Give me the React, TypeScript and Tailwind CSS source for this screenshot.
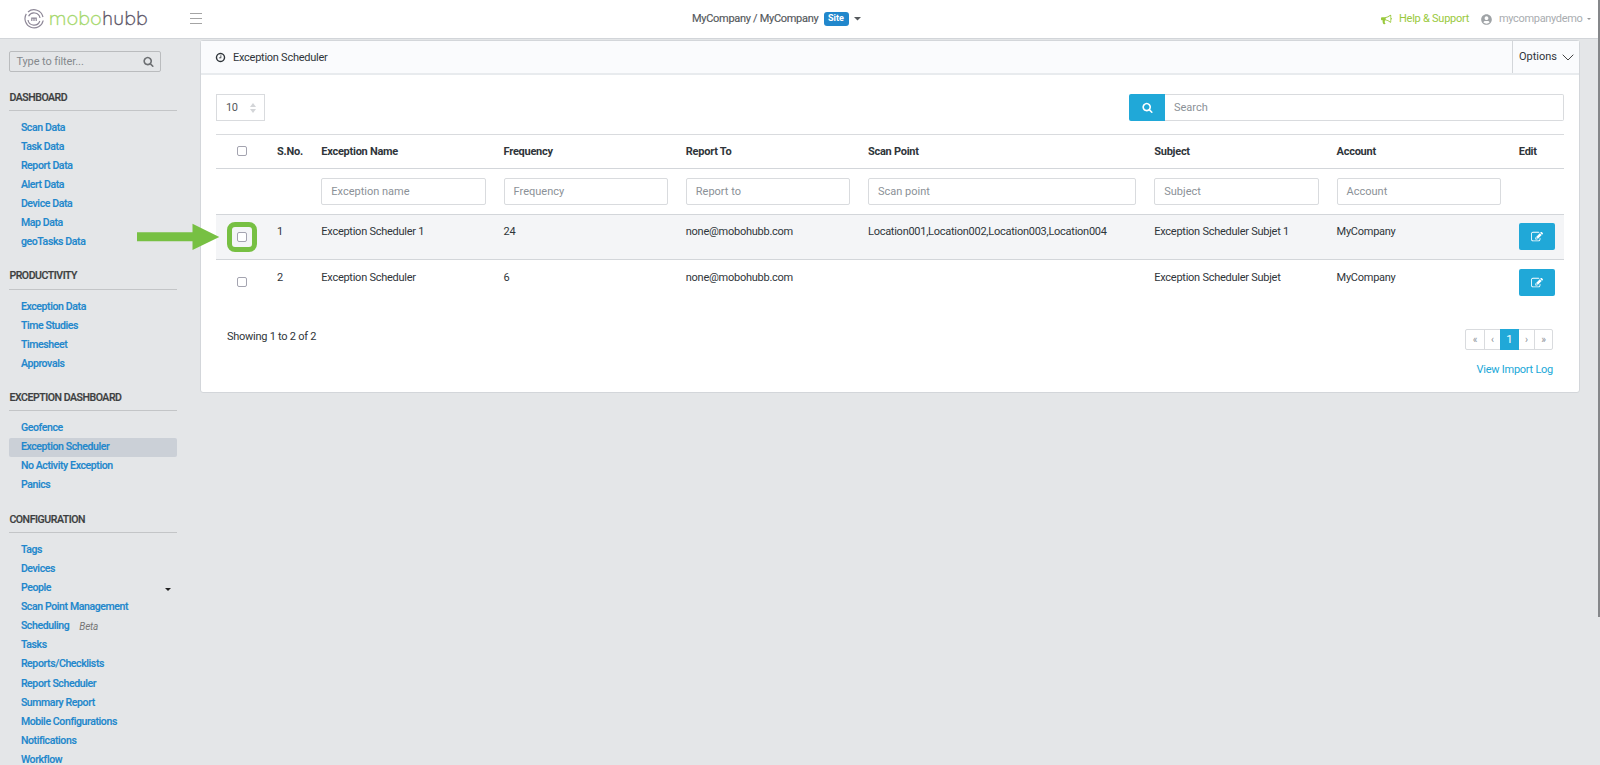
import React from "react";
import { FaUserCircle } from "react-icons/fa";

const SEARCH =
  "M1216 832q0-185-131.5-316.5t-316.5-131.5-316.5 131.5-131.5 316.5 131.5 316.5 316.5 131.5 316.5-131.5 131.5-316.5zm512 832q0 52-38 90t-90 38q-54 0-90-38l-343-342q-179 124-399 124-143 0-273.5-55.5t-225-150-150-225-55.5-273.5 55.5-273.5 150-225 225-150 273.5-55.5 273.5 55.5 225 150 150 225 55.5 273.5q0 220-124 399l343 343q37 37 37 90z";
const EDIT =
  "M888 1184l116-116-152-152-116 116v56h96v96h56zm520-126v190q0 119-84.5 203.5t-203.5 84.5h-832q-119 0-203.5-84.5t-84.5-203.5v-832q0-119 84.5-203.5t203.5-84.5h832q63 0 117 25 15 7 18 23 3 17-9 29l-49 49q-14 14-32 8-23-6-45-6h-832q-66 0-113 47t-47 113v832q0 66 47 113t113 47h832q66 0 113-47t47-113v-126q0-13 9-22l64-64q15-15 35-7t20 29zm-96-738l288 288-672 672h-288v-288zm444 132l-92 92-288-288 92-92q28-28 68-28t68 28l152 152q28 28 28 68t-28 68z";
const CLOCK =
  "M1024 544v448q0 14-9 23t-23 9h-320q-14 0-23-9t-9-23v-64q0-14 9-23t23-9h224v-352q0-14 9-23t23-9h64q14 0 23 9t9 23zm416 352q0-148-73-273t-198-198-273-73-273 73-198 198-73 273 73 273 198 198 273 73 273-73 198-198 73-273zm224 0q0 209-103 385.5t-279.5 279.5-385.5 103-385.5-103-279.5-279.5-103-385.5 103-385.5 279.5-279.5 385.5-103 385.5 103 279.5 279.5 103 385.5z";
const BULLHORN =
  "M1664 640q53 0 90.5 37.5t37.5 90.5-37.5 90.5-90.5 37.5v384q0 52-38 90t-90 38q-417-347-812-380-58 19-91 66t-31 100.5 40 92.5q-20 33-23 65.5t6 58 33.5 55 48 50 61.5 50.5q-29 58-111.5 83t-168.5 11.5-132-55.5q-7-23-29.5-87.5t-32-94.5-23-89-15-101 3.5-98.5 22-110.5h-122q-66 0-113-47t-47-113v-192q0-66 47-113t113-47h480q435 0 896-384 52 0 90 38t38 90v384zm-128 604v-954q-394 302-768 343v270q377 42 768 341z";

function Icon({ d, className }: { d: string; className?: string }) {
  return (
    <svg viewBox="0 0 1792 1792" fill="currentColor" className={className}>
      <path d={d} />
    </svg>
  );
}

function Caret({ className }: { className?: string }) {
  return (
    <svg viewBox="0 0 6 3" fill="currentColor" className={className}>
      <path d="M0 0h6L3 3z" />
    </svg>
  );
}

type Item = { label: string; beta?: boolean; caret?: boolean; active?: boolean };

const GROUPS: { title: string; items: Item[] }[] = [
  {
    title: "DASHBOARD",
    items: [
      { label: "Scan Data" },
      { label: "Task Data" },
      { label: "Report Data" },
      { label: "Alert Data" },
      { label: "Device Data" },
      { label: "Map Data" },
      { label: "geoTasks Data" },
    ],
  },
  {
    title: "PRODUCTIVITY",
    items: [
      { label: "Exception Data" },
      { label: "Time Studies" },
      { label: "Timesheet" },
      { label: "Approvals" },
    ],
  },
  {
    title: "EXCEPTION DASHBOARD",
    items: [
      { label: "Geofence" },
      { label: "Exception Scheduler", active: true },
      { label: "No Activity Exception" },
      { label: "Panics" },
    ],
  },
  {
    title: "CONFIGURATION",
    items: [
      { label: "Tags" },
      { label: "Devices" },
      { label: "People", caret: true },
      { label: "Scan Point Management" },
      { label: "Scheduling", beta: true },
      { label: "Tasks" },
      { label: "Reports/Checklists" },
      { label: "Report Scheduler" },
      { label: "Summary Report" },
      { label: "Mobile Configurations" },
      { label: "Notifications" },
      { label: "Workflow" },
    ],
  },
];

const ROWS = [
  {
    no: "1",
    name: "Exception Scheduler 1",
    freq: "24",
    to: "none@mobohubb.com",
    scan: "Location001,Location002,Location003,Location004",
    subject: "Exception Scheduler Subjet 1",
    account: "MyCompany",
    marked: true,
  },
  {
    no: "2",
    name: "Exception Scheduler",
    freq: "6",
    to: "none@mobohubb.com",
    scan: "",
    subject: "Exception Scheduler Subjet",
    account: "MyCompany",
    marked: false,
  },
];

const COLS =
  "grid grid-cols-[52px_44.3px_182.3px_182.2px_182.2px_286.3px_182.3px_182.3px_54px]";

function Box() {
  return <span className="block size-[10px] rounded-[2px] border border-[#a4a4b0] bg-white" />;
}

function Filter({ text }: { text: string }) {
  return (
    <div className="px-[9px]">
      <div className="flex h-[27px] items-center rounded-[2px] border border-[#d9dbde] px-[9px] pt-px tracking-normal text-[#8b9197]">
        {text}
      </div>
    </div>
  );
}

function Header() {
  return (
    <header className="flex h-[39px] shrink-0 items-center border-b border-[#d2d5d9] bg-white">
      <div className="flex w-[190px] shrink-0 items-center pl-[24px]">
        <svg viewBox="0 0 20 20" className="size-5" fill="none" stroke="#8d8797" strokeWidth="1.2">
          <path d="M4 3A9.2 9.2 0 0 1 19 8M19.2 11.5A9.2 9.2 0 1 1 2.3 4.9" />
          <path d="M4.6 7.2A6.1 6.1 0 0 1 16 9M15.8 12A6.1 6.1 0 0 1 4 11" />
          <path d="M7.8 12V9.2h4.4V12M10 9.2V12" />
        </svg>
        <span className="-mt-px ml-[5px] font-['Quicksand','Lato',sans-serif] text-[19px] leading-none font-light tracking-[0.45px] text-[#5e5769] [-webkit-text-stroke:0.4px_currentColor]">
          <span className="text-[#a5d86c]">mobo</span>hubb
        </span>
      </div>
      <div className="-mt-[2px] flex w-3 flex-col gap-[4px]">
        <span className="h-px bg-[#a4a4a4]" />
        <span className="h-px bg-[#a4a4a4]" />
        <span className="h-px bg-[#a4a4a4]" />
      </div>
      <div className="ml-[490px] flex items-center tracking-[-0.3px] text-[#55595c]">
        <span className="w-[126.5px] text-[11px] whitespace-nowrap [-webkit-text-stroke:0.15px_currentColor]">
          MyCompany / MyCompany
        </span>
        <span className="ml-[5px] flex h-[14px] w-[25px] items-center justify-center rounded-[3px] bg-[#2187cc] text-[9px] font-bold tracking-normal text-white">
          Site
        </span>
        <Caret className="ml-[5px] h-[3.5px] w-[7px]" />
      </div>
      <div className="ml-auto flex items-center pr-[9px] text-[11px] tracking-[-0.25px]">
        <Icon d={BULLHORN} className="size-[11px] text-[#99c93c]" />
        <span className="ml-[7px] w-[71px] whitespace-nowrap text-[#99c93c]">Help &amp; Support</span>
        <FaUserCircle className="ml-[11px] size-[11px] text-[#9fa3a6]" />
        <span className="ml-[7px] w-[84px] tracking-[-0.33px] whitespace-nowrap text-[#a9adb0]">mycompanydemo</span>
        <Caret className="ml-[4px] h-[2px] w-[4px] text-[#999]" />
      </div>
    </header>
  );
}

function Sidebar() {
  return (
    <aside className="w-[200px] shrink-0 overflow-hidden pl-[9.4px]">
      <div className="mt-[12px] flex h-[21px] w-[152px] items-center justify-between rounded-[2px] border border-[#babcbe] px-[6px] text-[11px] tracking-[-0.1px] text-[#85898d]">
        <span className="pt-px">Type to filter...</span>
        <Icon d={SEARCH} className="size-[11px] text-[#6c6f72]" />
      </div>
      <div className="mt-[0.5px] w-[167.5px]">
        {GROUPS.map((g) => (
          <section key={g.title}>
            <h3 className="mb-[7px] h-[38.3px] border-b border-[#c3c5c7] pt-[17px] text-[10.5px] leading-[16px] font-medium tracking-[-0.43px] text-[#3c3e40] [-webkit-text-stroke:0.2px_#3c3e40]">
              {g.title}
            </h3>
            {g.items.map((it) => (
              <div
                key={it.label}
                className={
                  "flex h-[19.1px] items-center rounded-[2px] pt-[0.2px] pr-[6px] pl-[11.5px] text-[10.5px] font-medium tracking-[-0.38px] text-[#2187cc] [-webkit-text-stroke:0.15px_#2187cc] " +
                  (it.active ? "bg-[#cbd0d7]" : "")
                }
              >
                {it.label}
                {it.beta && (
                  <span className="ml-[10px] text-[10px] font-normal tracking-[-0.2px] text-[#777] italic [-webkit-text-stroke:0px]">
                    Beta
                  </span>
                )}
                {it.caret && <Caret className="mt-[3px] ml-auto h-[3px] w-[6px] text-[#222]" />}
              </div>
            ))}
          </section>
        ))}
      </div>
    </aside>
  );
}

function Card() {
  return (
    <div className="mt-px h-[353px] w-[1380px] rounded-[3px] border border-[#d3d6da] bg-white tracking-[-0.26px]">
      <div className="flex h-[34px] items-stretch border-b-2 border-[#e8ebee] bg-[#fafbfd]">
        <div className="flex flex-1 items-center pl-[14px]">
          <Icon d={CLOCK} className="size-[11px]" />
          <span className="mt-[2px] ml-[7px]">Exception Scheduler</span>
        </div>
        <div className="flex w-[67px] items-center border-l border-[#d3d6da] pl-[6px] tracking-normal">
          Options
          <svg viewBox="0 0 12 7" className="ml-[5px] h-[7px] w-[12px]" fill="none" stroke="#444" strokeWidth="1">
            <path d="M.7.7 6 6 11.3.7" />
          </svg>
        </div>
      </div>
      <div className="pr-[15px] pl-[15px]">
        <div className="mt-[19px] flex h-[27px] justify-between">
          <div className="flex w-[49px] items-center justify-between border border-[#d9dbde] pt-px pr-[8px] pl-[9px] tracking-[-0.4px] text-[#55595c]">
            10
            <svg viewBox="0 0 6 10" className="h-[10px] w-[6px]" fill="#d3d5d8">
              <path d="M3 0l3 4H0zM3 10l3-4H0z" />
            </svg>
          </div>
          <div className="flex w-[435px]">
            <div className="flex w-[36px] items-center justify-center rounded-l-[2px] bg-[#20a8d8] text-white">
              <Icon d={SEARCH} className="size-[11px]" />
            </div>
            <div className="flex flex-1 items-center rounded-r-[2px] border border-l-0 border-[#d9dbde] pt-px pl-[9px] tracking-normal text-[#8b9197]">
              Search
            </div>
          </div>
        </div>
        <div className="mt-[13px]">
          <div className={COLS + " h-[34px] items-center border-t border-[#d9dbde] font-bold"}>
            <div className="pb-px pl-[21px]">
              <Box />
            </div>
            {["S.No.", "Exception Name", "Frequency", "Report To", "Scan Point", "Subject", "Account", "Edit"].map(
              (h) => (
                <div key={h} className="pt-px pl-[9px]">
                  {h}
                </div>
              ),
            )}
          </div>
          <div className={COLS + " h-[46px] items-center border-t border-[#d3d6da]"}>
            <div />
            <div />
            <Filter text="Exception name" />
            <Filter text="Frequency" />
            <Filter text="Report to" />
            <Filter text="Scan point" />
            <Filter text="Subject" />
            <Filter text="Account" />
            <div />
          </div>
          {ROWS.map((r) => (
            <div
              key={r.no}
              className={
                COLS +
                " border-t border-[#d3d6da] leading-[16px] " +
                (r.marked ? "h-[45px] bg-[#f4f5f7] pt-[8px]" : "h-[46px] pt-[9px]")
              }
            >
              <div className={r.marked ? "pt-[9px] pl-[21px]" : "pt-[8px] pl-[21px]"}>
                <div className="relative w-[10px]">
                  <Box />
                  {r.marked && (
                    <>
                      <span className="absolute -top-[10px] -left-[10px] size-[30px] rounded-[8px] border-[5px] border-[#77c043]" />
                      <svg
                        viewBox="0 0 83 28"
                        className="absolute -top-[9px] -left-[100px] h-[28px] w-[83px]"
                        fill="#77c043"
                      >
                        <path d="M0 9.3h55.5V.7L82.3 14 55.5 27v-8.7H0z" />
                      </svg>
                    </>
                  )}
                </div>
              </div>
              <div className="pt-px pl-[9px]">{r.no}</div>
              <div className="pt-px pl-[9px]">{r.name}</div>
              <div className="pt-px pl-[9px]">{r.freq}</div>
              <div className="pt-px pl-[9px]">{r.to}</div>
              <div className="pt-px pl-[9px]">{r.scan}</div>
              <div className="pt-px pl-[9px]">{r.subject}</div>
              <div className="pt-px pl-[9px]">{r.account}</div>
              <div className="pl-[9px]">
                <div className="flex h-[27px] w-[36px] items-center justify-center rounded-[2px] bg-[#20a8d8] text-white">
                  <Icon d={EDIT} className="size-[12px]" />
                </div>
              </div>
            </div>
          ))}
        </div>
        <div className="mt-[24px] flex items-start justify-between pr-[11px] pl-[11px]">
          <span className="leading-[16px]">Showing 1 to 2 of 2</span>
          <div className="flex h-[21px] rounded-[2px] border border-[#d9dbde] text-[10px] tracking-normal text-[#8b9197]">
            <span className="flex w-[18px] items-center justify-center">«</span>
            <span className="flex w-[16px] items-center justify-center border-l border-[#d9dbde]">‹</span>
            <span className="-my-px flex w-[19px] items-center justify-center bg-[#20a8d8] text-[11.5px] text-white">
              1
            </span>
            <span className="flex w-[16px] items-center justify-center border-r border-[#d9dbde]">›</span>
            <span className="flex w-[17px] items-center justify-center">»</span>
          </div>
        </div>
        <div className="mt-[12px] pr-[11px] text-right leading-[16px] text-[#20a8d8]">View Import Log</div>
      </div>
    </div>
  );
}

export default function App() {
  return (
    <div className="relative flex h-[765px] w-[1600px] flex-col overflow-hidden bg-[#e4e6e8] font-['Roboto',sans-serif] text-[11px] text-[#2f353a]">
      <Header />
      <div className="flex min-h-0 flex-1 tracking-[-0.2px]">
        <Sidebar />
        <Card />
      </div>
      <span className="absolute top-0 right-0 h-[617px] w-[2px] bg-[#85878a]" />
    </div>
  );
}
